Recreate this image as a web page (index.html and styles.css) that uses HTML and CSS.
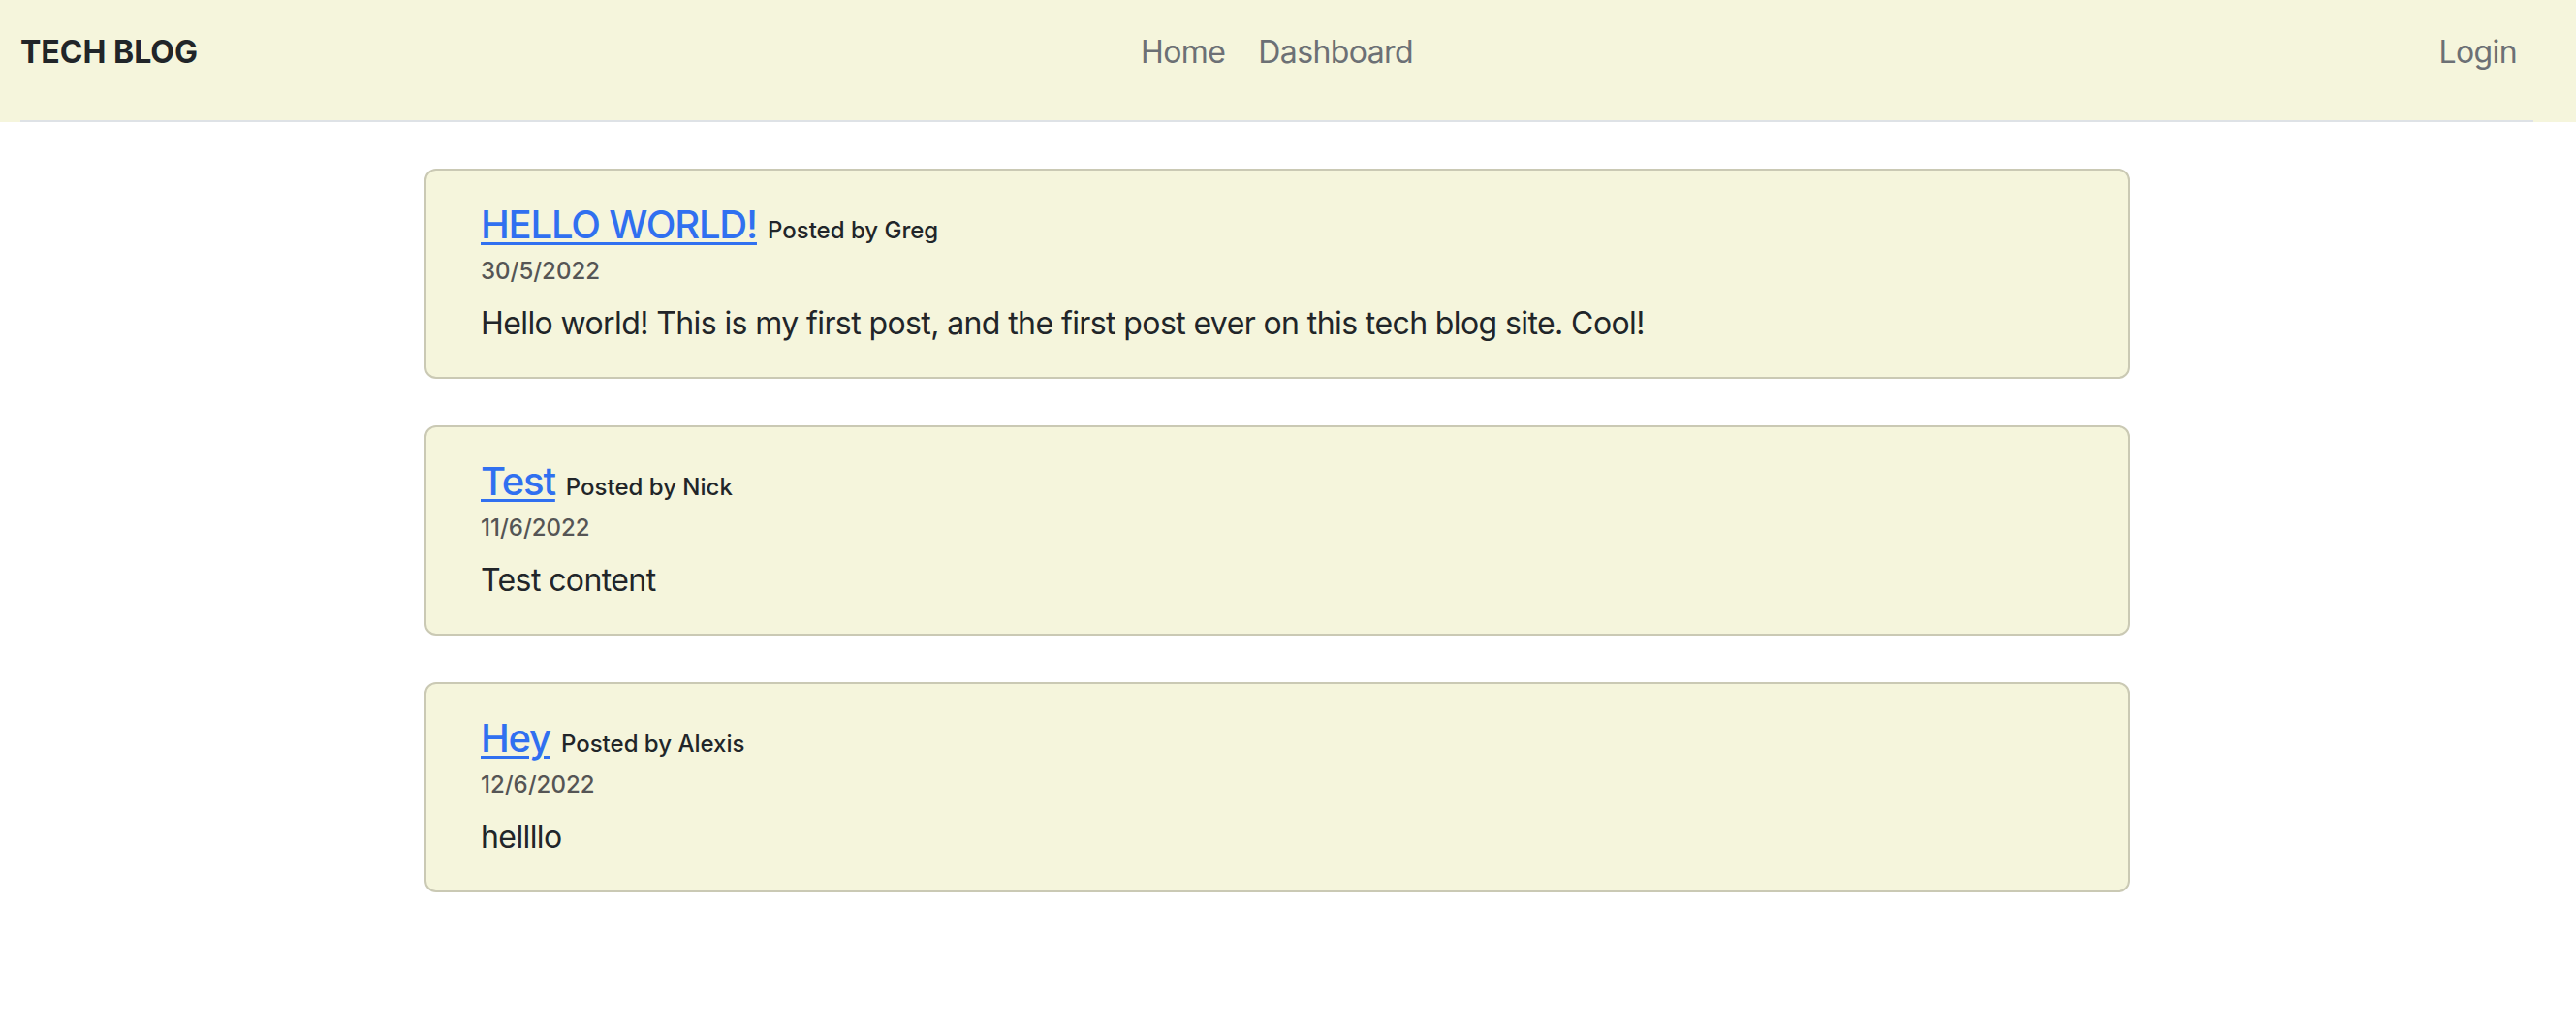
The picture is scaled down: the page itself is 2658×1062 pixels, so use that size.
FILE: index.html
```html
<!DOCTYPE html>
<html lang="en">
<head>
<meta charset="utf-8">
<title>Tech Blog</title>
<link rel="stylesheet" href="styles.css">
</head>
<body>
<header class="site-header">
  <nav class="navbar">
    <a class="brand" href="#">TECH BLOG</a>
    <div class="nav-center">
      <a class="nav-link" href="#">Home</a>
      <a class="nav-link" href="#">Dashboard</a>
    </div>
    <div class="nav-right">
      <a class="nav-link" href="#">Login</a>
    </div>
  </nav>
</header>
<main class="posts">
  <article class="card">
    <div class="card-title-row"><a class="post-title" href="#">HELLO WORLD!</a><span class="author">Posted by Greg</span></div>
    <div class="post-date">30/5/2022</div>
    <p class="post-body">Hello world! This is my first post, and the first post ever on this tech blog site. Cool!</p>
  </article>
  <article class="card">
    <div class="card-title-row"><a class="post-title" href="#">Test</a><span class="author">Posted by Nick</span></div>
    <div class="post-date">11/6/2022</div>
    <p class="post-body">Test content</p>
  </article>
  <article class="card">
    <div class="card-title-row"><a class="post-title" href="#">Hey</a><span class="author">Posted by Alexis</span></div>
    <div class="post-date">12/6/2022</div>
    <p class="post-body">hellllo</p>
  </article>
</main>
</body>
</html>
```

FILE: styles.css
```css
* { box-sizing: border-box; }
html, body { margin: 0; padding: 0; background: #ffffff; }
body {
  font-family: Inter, "Noto Sans", "Liberation Sans", sans-serif;
  color: #212529;
}
a { text-decoration: none; }

.site-header {
  background: #f5f5dc;
  height: 126px;
  padding: 0 44px 0 21px;
}
.navbar {
  height: 126px;
  border-bottom: 2px solid #dee2e6;
  display: grid;
  grid-template-columns: 1fr auto 1fr;
  align-items: start;
  padding-top: 30px;
}
.brand {
  font-size: 32px;
  line-height: 48px;
  font-weight: 700;
  color: #212529;
  justify-self: start;
}
.nav-center {
  display: flex;
  gap: 34px;
}
.nav-right {
  justify-self: end;
  padding-right: 17px;
}
.nav-link {
  font-size: 32px;
  line-height: 48px;
  color: #6c7075;
  letter-spacing: -0.6px;
}

.posts {
  padding: 48px 0 48px 438px;
  display: flex;
  flex-direction: column;
  gap: 48px;
}
.card {
  width: 1760px;
  height: 217px;
  background: #f5f5dc;
  border: 2px solid #cac9b4;
  border-radius: 12px;
  padding: 32px 56px;
}
.card-title-row {
  line-height: 48px;
  height: 50px;
}
.post-title {
  font-size: 40px;
  font-weight: 500;
  color: #3070f0;
  text-decoration: underline;
  text-decoration-thickness: 3px;
  text-underline-offset: 4px;
  letter-spacing: -1.2px;
}
.author {
  margin-left: 11px;
  font-size: 24px;
  font-weight: 500;
  color: #212529;
}
.post-date {
  margin-top: 3px;
  font-size: 24px;
  line-height: 37px;
  font-weight: 500;
  color: #555555;
}
.post-body {
  margin: 12px 0 0;
  font-size: 32px;
  line-height: 48px;
  letter-spacing: -0.6px;
}
```
